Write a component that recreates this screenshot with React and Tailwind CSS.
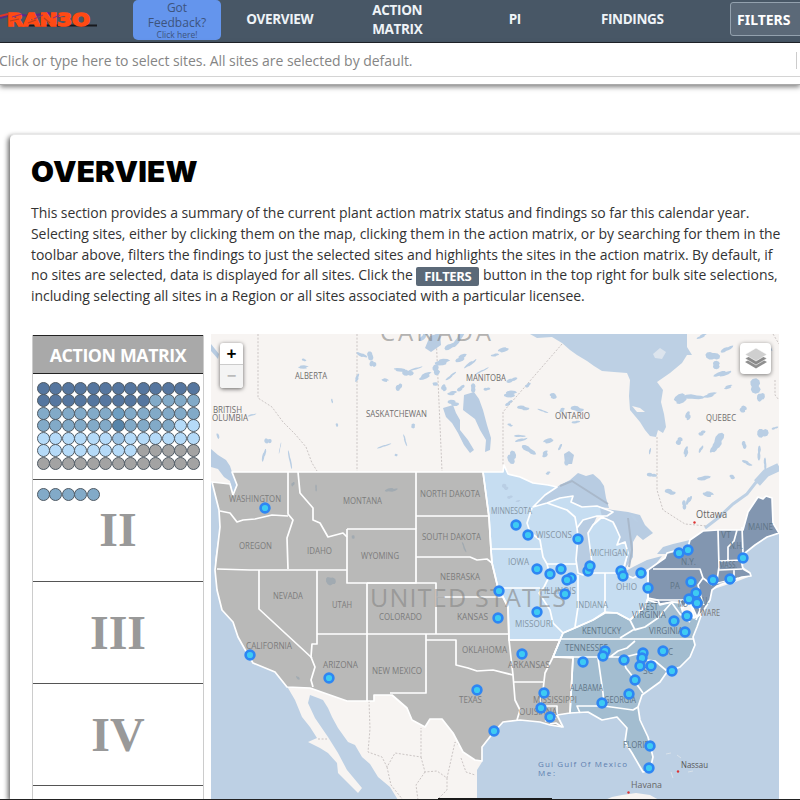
import React from "react";

const NAV = ["OVERVIEW", "ACTION MATRIX", "PI", "FINDINGS"];

const DOT = {
  d: "bg-[#55769f]",
  m: "bg-[#82aac8]",
  l: "bg-[#b5daf8]",
  g: "bg-[#a3a3a3]",
  x: "bg-[#6f9fc2]",
  y: "bg-[#5785aa]",
  z: "bg-[#9cc3e4]",
};
const MATRIX =
  "ddddddddddddd" +
  "dddddddddmmmm" +
  "mmmmmmxmmmmmm" +
  "mmmmmmymmmmll" +
  "llllllzllllll" +
  "llllllllggggg" +
  "ggggggggggggg";

function Dots({ codes }) {
  return (
    <div className="grid grid-cols-[repeat(13,12.5px)] auto-rows-[12.5px] pl-[3.5px]">
      {codes.split("").map((c, i) => (
        <span key={i} className={`h-[13px] w-[13px] rounded-full border border-[#4f5a64] ${DOT[c]}`} />
      ))}
    </div>
  );
}

function Level({ children }) {
  return (
    <div className="flex h-[102px] shrink-0 items-center justify-center border-b border-[#555] pt-[2px] font-['Liberation_Serif',serif] text-[48px] font-bold leading-none text-[#999]">
      {children}
    </div>
  );
}

const LAND =
  "M211 334H530L537 338L552 337L562 343L570 350L577 355L587 361L594 366L602 371L614 372L627 373L630 380L629 396L630 410L640 422L645 430L650 436L656 437L658 430L663 433L666 427L664 414L661 402L663 390L657 382L670 373L682 363L687 355L692 355L687 347V334H779V533L767 537L755 545L745 553L743 567L750 572L751 576L738 581L717 588L712 590L710 600L702 613L697 627L693 637L695 645L690 657L680 667L667 672L660 682L642 695L638 707L640 720L648 737L653 757L650 770L643 772L632 753L625 742L627 728L617 717L602 720L588 712L570 713L557 715L563 727L550 725L540 722L520 720L503 722L493 733L482 747V762L477 770V800H398L390 787L378 777L370 764L362 757L355 745L348 742L338 728L332 717L328 708L323 700L318 698L310 695L308 703L315 718L328 737L338 753L347 770L362 788L358 793L338 773L337 763L328 753L320 748L308 742L317 738L310 727L302 717L295 700L288 688L285 683L275 672L253 663L247 653L238 637L233 622L222 610L217 590L215 570V560L220 527L219 510L212 482H211Z";
const REGION_GRAY =
  "M232 472H483L489 517L491 550L492 563L498 588L503 597L508 607L509 640H560L553 657H573L570 713L557 715L563 727L550 725L540 722L520 720L503 722L493 733L482 747V761L475 760L463 752L453 733L442 719H430L425 727L412 720L407 708L392 695H374V701H347L310 688L287 687L275 672L253 663L247 653L238 637L233 622L222 610L217 590L215 570L220 527L219 510L212 482L230 484L233 495L237 485Z";
const REGION_LIGHT =
  "M483 472H503L504 465L508 474L520 477L533 483L548 485L557 487L545 495L533 507L547 503L560 498L573 496L571 502L582 507L597 506L613 512L607 516L597 516L583 520L577 528L578 537L576 560L578 573L583 575L592 563L588 533L593 525L602 517L613 522L616 528L620 537L617 545L625 542L628 553L622 573L633 578L648 570V598L645 607L638 612L630 620L617 613H605L593 620L577 627L563 633L560 640H509L508 607L503 597L498 588L492 563L491 550L489 517Z";
const REGION_MID =
  "M560 640L563 633L577 627L593 620L605 612L617 613L630 620L645 607L648 598L658 600L660 605L672 602L680 603L683 613L694 618L702 613L697 627L693 637L695 645L690 657L680 667L667 672L660 682L642 695L638 707L640 720L648 737L653 757L650 770L643 772L632 753L625 742L627 728L617 717L602 720L588 712L570 713L573 658L553 657Z";
const REGION_DARK =
  "M743 530L748 512L758 497L763 499L766 496L772 498L773 523L779 533L767 537L755 545L745 553L741 560L743 569L750 573L751 576L742 577L730 581L717 586L712 590L710 600L702 613L697 617L692 606L688 601L683 608L680 602L672 602L660 604L648 600V570L655 565L665 558L667 553L688 547L690 540L703 531L718 530Z";
const BORDERS = [
  "M220 511L230 513L237 522L243 520L255 519L272 515L288 516",
  "M288 472V514L293 520L287 538L288 569",
  "M217 569L250 570L347 570",
  "M298 472L300 493L313 508V520L320 523L328 537L343 533L347 537",
  "M347 529H416V583H347V529",
  "M416 472V529M416 516H489",
  "M416 557H470L477 560L487 559L492 563",
  "M367 583H436V597H503M436 597V634M367 583V701",
  "M317 570V634H508M317 634V644H312L311 657L315 667L311 680L313 687",
  "M259 570V609L312 658",
  "M426 634V693H390M426 640H456V665L468 668L477 671L493 670L513 675",
  "M509 640L513 675L515 700L520 710L517 720M514 682H543",
  "M560 640L553 657L545 673L543 690L540 700L543 706H557V716",
  "M490 549H542M532 508L527 523L530 532L540 540L543 557L547 564L550 575L544 587L539 593L550 610L553 623L563 633",
  "M547 564H576M498 588H540M578 575V607L575 627M605 573V612M583 573H622",
  "M547 503L567 510L575 517L577 528",
  "M653 569H700L703 578L712 585M703 578L698 585L701 597L704 605M648 600H690L694 618",
  "M718 530L719 567L717 580M737 530L734 541L728 547V560M742 527L743 553M719 561L742 560M719 570L742 569M734 570V578",
  "M560 639H693M620 638L633 630L645 627L658 618L672 602M630 620L635 630L645 627M672 603L680 614L690 622",
  "M635 641L627 648L618 651L610 657M553 657H625L637 654L647 660L655 661L667 671",
  "M623 659L626 668L633 677L638 686L643 693M598 658L603 693L604 706",
  "M580 713L577 706H604L633 710L638 707M697 595L700 610L696 620",
];
const LAKES = [
  "M560 485L570 480L578 473L586 476L593 474L600 480L604 486L606 498L609 508L597 507L582 507L571 502L573 496L560 498L547 503L533 507L545 495Z",
  "M583 520L597 516L593 525L588 533L592 563L583 575L578 573L576 560L578 537L577 528Z",
  "M600 508L613 510L628 512L640 515L645 525L653 533L643 540L637 535L633 542L633 557L625 569L628 553L625 542L617 545L620 537L616 528L613 522L602 517Z",
  "M622 573L635 566L647 560L662 556L655 565L648 570L633 578Z",
  "M657 554L663 547L673 544L690 540L688 546L677 552L666 554Z",
  "M211 449L218 455L226 460L230 466L233 475L237 485L233 494L230 481L224 477L218 469L211 467Z",
  "M464 395L474 392L479 399L483 410L487 425L491 438L490 450L485 452L486 440L480 430L475 419L463 410Z",
  "M443 408L453 405L456 413L460 420L460 430L468 440L474 450L470 453L464 445L458 433L452 423L446 417Z",
  "M564 454L569 451L574 455L572 464L565 464Z",
  "M211 344L219 354L218 359L211 351ZM430 336L440 333L441 345L431 352L425 348Z",
];
// centre x, centre y, width, height, tilt
const PONDS = [
  [303,367,12,3,5],[304,360,4,3,0],[362,355,11,4,30],[370,356,7,8,0],[373,364,6,8,20],[385,380,8,3,20],[357,378,3,9,30],[399,387,6,8,0],[400,370,16,3,5],[408,373,10,8,0],[425,376,15,5,-20],[415,369,14,2,-20],[424,336,12,5,-40],[459,338,6,18,35],[451,346,12,7,-30],[442,362,16,6,0],[436,370,8,10,20],[451,376,12,3,-35],[435,384,7,3,0],[444,388,5,8,30],[452,393,10,4,0],[453,403,11,6,0],[461,388,8,5,-30],[473,388,6,8,0],[482,371,13,2,-30],[461,358,13,6,-20],[470,364,15,3,-40],[487,389,6,4,0],[413,426,5,4,0],[384,446,13,2,-20],[405,440,2,12,-20],[332,401,2,4,0],[337,425,2,5,-20],[396,455,4,2,20],[268,441,6,7,-30],[264,455,3,13,10],[290,460,2,17,-10],[218,436,2,8,-20],[280,448,1,10,10],[252,415,8,2,-20],[495,355,8,3,0],[503,350,12,4,-20],[512,380,10,5,-20],[510,394,15,6,0],[523,408,11,5,0],[528,385,6,4,-20],[553,396,8,5,0],[543,411,10,2,20],[562,410,6,4,0],[577,409,12,6,0],[576,422,8,3,0],[548,441,12,4,-20],[529,450,14,7,30],[545,454,8,5,-30],[521,440,12,3,-20],[512,457,9,14,-25],[560,447,3,6,30],[520,436,10,3,0],[548,473,5,3,0],[510,425,5,3,0],[509,403,8,4,-30],[680,399,16,8,-30],[694,397,18,6,0],[710,395,14,4,-10],[722,374,18,5,-20],[713,356,13,10,20],[716,365,9,7,0],[727,349,12,5,-30],[702,336,12,3,-20],[755,386,13,13,30],[761,397,7,11,0],[743,409,8,6,30],[688,416,5,10,25],[702,433,7,5,0],[718,441,10,16,40],[714,449,5,12,35],[679,441,7,7,20],[686,452,4,12,20],[701,449,3,8,20],[744,445,5,7,0],[763,433,10,12,0],[759,453,4,13,0],[747,463,10,4,20],[704,478,13,5,0],[732,477,6,4,0],[652,475,9,5,10],[728,387,10,3,-15],[770,348,2,8,-30],[650,451,2,7,0],[765,464,3,11,0],[775,428,6,3,-20],[708,494,12,5,20],[670,492,10,6,0],[689,500,4,11,20],[684,505,5,8,0],[651,475,7,4,0],[567,461,6,8,0],[391,490,12,4,-15],[293,484,3,5,0],[316,488,2,6,0],[331,581,8,12,-25],[464,547,2,10,-25],[505,487,6,6,0],[510,497,5,4,0],[353,537,4,3,0],[298,678,2,6,-35],[518,501,5,2,0],[634,518,10,3,40],
];

function blob([x, y, w, h, t], n) {
  const a = (t * Math.PI) / 180;
  const pts = [];
  for (let i = 0; i < 13; i++) {
    const r = 0.45 + 0.75 * Math.abs(Math.sin(i * 2.7 + n * 1.9));
    const px = (Math.cos((i / 13) * 6.283) * w * r) / 2;
    const py = (Math.sin((i / 13) * 6.283) * h * r) / 2;
    pts.push(`${(x + px * Math.cos(a) - py * Math.sin(a)).toFixed(1)},${(y + px * Math.sin(a) + py * Math.cos(a)).toFixed(1)}`);
  }
  return pts.join(" ");
}

// text, left x, baseline y, width
const CANADA_LABELS = [
  ["ALBERTA",295,379,32],["SASKATCHEWAN",366,417,61],["MANITOBA",466,381,40],["ONTARIO",555,419,35],["QUEBEC",706,421,30],["BRITISH",213,413,29],["OLUMBIA",212,421,36],
];
const STATE_LABELS = [
  ["WASHINGTON",229,502,52],["OREGON",239,549,33],["MONTANA",343,504,39],["IDAHO",307,554,25],["WYOMING",361,559,38],["NORTH DAKOTA",420,497,60],["SOUTH DAKOTA",422,540,59],["NEBRASKA",440,580,40],["NEVADA",273,599,30],["UTAH",332,608,20],["COLORADO",379,620,43],["KANSAS",457,620,31],["CALIFORNIA",246,649,46],["ARIZONA",323,668,35],["NEW MEXICO",372,674,50],["OKLAHOMA",462,653,45],["TEXAS",459,703,23],["ARKANSAS",508,668,42],["MISSISSIPPI",533,703,44],["OUISIANA",519,715,38],
  ["MINNESOTA",491,514,41],["WISCONS",536,538,36],["IOWA",508,565,21],["ILLINOIS",544,594,32],["MISSOURI",515,627,38],["INDIANA",576,608,32],["MICHIGAN",590,556,38],["OHIO",616,590,21],
  ["KENTUCKY",582,634,39],["TENNESSEE",565,651,43],["WEST",639,610,19],["VIRGINIA",632,618,34],["VIRGINIA",649,634,34],["NC",662,655,11],["SC",643,674,10],["ALABAMA",570,691,33],["GEORGIA",604,703,32],["FLORIDA",623,748,32],
  ["MAINE",748,530,25],["VT",721,538,10],["N.H.",730,549,13],["MASS.",719,568,18],["N.Y.",681,565,15],["PA",670,589,10],["MD",678,607,10],["N.J.",699,604,10],
];
const SITES = [
  [265,508],[250,655],[329,678],[477,690],[494,731],[499,591],[498,618],[522,654],[544,693],[541,708],[550,717],[516,525],[528,535],[578,539],[537,569],[550,574],[561,569],[571,578],[567,580],[565,594],[537,612],[588,571],[590,566],[621,571],[623,576],[641,573],[648,588],[679,553],[688,550],[743,558],[713,580],[730,579],[691,582],[696,593],[689,599],[697,603],[687,616],[674,621],[685,632],[605,651],[603,656],[583,662],[624,660],[643,653],[642,658],[640,666],[651,666],[663,651],[672,671],[635,680],[629,694],[602,703],[650,746],[649,768],
];

function Label({ t, x, y, w, fill, size = 8.6 }) {
  return (
    <text x={x} y={y} textLength={w} lengthAdjust="spacingAndGlyphs" fontSize={size} fill={fill}>
      {t}
    </text>
  );
}

function SiteMap() {
  return (
    <svg viewBox="211 334 568 466" className="block h-[466px] w-[568px]" fontFamily="'Open Sans', 'Noto Sans', sans-serif">
      <rect x="211" y="334" width="568" height="466" fill="#bdd0e4" />
      <path d={LAND} fill="#f7f4f2" />
      <path d="M605 800L612 797L622 795L636 793L650 795L659 800Z" fill="#f7f4f2" />
      <path d="M632 406L640 408L645 412L637 412Z" fill="#f7f4f2" />
      <path d="M653 354L660 348L666 352L662 359L655 358Z" fill="#dce4ed" />
      <path d="M779 467L768 471L757 481L747 494L733 504L718 518L705 528" fill="none" stroke="#bdd0e4" strokeWidth="3" />
      <path d="M779 467L766 473L757 483" fill="none" stroke="#bdd0e4" strokeWidth="8" />
      <g fill="none" stroke="#cbc5c4" strokeWidth="1" strokeDasharray="2 1.6">
        <path d="M258 334V398L272 407L283 422L295 434L306 447L312 463L317 471M357 334V471M436 334L442 471M562 344L503 412V466M657 437V490L663 510L685 524L707 526M773 334L779 344M775 380V395L779 400" />
        <path d="M369 701L370 729L368 752L382 757L387 767L395 753L421 757V728M421 757L425 772L437 771L447 778L455 742L463 748M387 767L391 785L403 800M425 772L416 785L418 800M447 778V790L437 800M461 758L466 772L475 775M318 739H327" />
      </g>
      <path d={REGION_GRAY} fill="#b9b9b8" />
      <path d={REGION_LIGHT} fill="#c6ddf1" />
      <path d={REGION_MID} fill="#a3bdd0" />
      <path d={REGION_DARK} fill="#8296b0" />
      {LAKES.map((d) => (
        <path key={d} d={d} fill="#b8cce2" />
      ))}
      <path d="M560 486L572 481L608 504M628 518L632 550L629 567" fill="none" stroke="#a9b8ca" strokeWidth="2" />
      {PONDS.map((p, i) => (
        <polygon key={i} points={blob(p, i)} fill={p[1] > 482 && p[0] < 470 ? "#a1aab1" : "#b9cee4"} />
      ))}
      <path d="M717 583L738 578L734 583Z" fill="#8296b0" stroke="#fff" strokeWidth="1" />
      <g fill="none" stroke="#fff" strokeWidth="1.7" strokeLinejoin="round">
        <path d={REGION_GRAY} />
        <path d={REGION_LIGHT} />
        <path d={REGION_MID} />
        <path d={REGION_DARK} />
        {BORDERS.map((d) => (
          <path key={d} d={d} />
        ))}
        <path d="M550 724L556 723L562 727M545 721L556 718" />
      </g>
      <g fill="#858585" fillOpacity="0.62">
        <text x="380" y="341" fontSize="24" textLength="111">CANADA</text>
        <text x="370" y="606.5" fontSize="25" textLength="196">UNITED STATES</text>
      </g>
      {CANADA_LABELS.map(([t, x, y, w]) => (
        <Label key={t} t={t} x={x} y={y} w={w} fill="#6f6d6d" />
      ))}
      {STATE_LABELS.map(([t, x, y, w]) => (
        <Label key={t + y} t={t} x={x} y={y} w={w} fill={x > 485 && y < 630 && x < 632 ? "#8495a5" : x > 560 ? "#5f7587" : "#7c7c7c"} />
      ))}
      <Label t="WARE" x={700} y={616} w={20} fill="#777" />
      <Label t="Ottawa" x={696} y={518} w={31} fill="#666" size={10} />
      <Label t="Nassau" x={681} y={768} w={27} fill="#555" size={9} />
      <Label t="Havana" x={631} y={788} w={31} fill="#666" size={9} />
      <g fontSize="8" fill="#5d7fb0">
        <text x="538" y="767" textLength="89">Gul Gulf Of Mexico</text>
        <text x="538" y="776" textLength="17">Me:</text>
      </g>
      <path d="M666 754L671 753M677 755L681 758M671 772L673 778M688 772L693 771" stroke="#d9e2ea" strokeWidth="1" />
      <g fill="#d33">
        <circle cx="694.5" cy="522.5" r="1.2" />
        <circle cx="678" cy="771.5" r="1.2" />
        <circle cx="628.5" cy="792.5" r="1.2" />
      </g>
      <g fill="#3ecbf2" stroke="#2e86f3" strokeWidth="2.6">
        {SITES.map(([x, y]) => (
          <circle key={`${x}-${y}`} cx={x} cy={y} r="4.4" />
        ))}
      </g>
    </svg>
  );
}

export default function App() {
  return (
    <div className="flex h-[800px] w-[800px] flex-col overflow-hidden bg-white font-['Open_Sans','Noto_Sans',sans-serif]">
      <header className="flex h-[43px] shrink-0 border-b border-[#20242a] bg-[#485766]">
        <div className="w-[133px] shrink-0">
          <svg viewBox="0 0 133 40" className="h-[40px] w-[133px]" fontFamily="'DejaVu Sans', sans-serif" fontWeight="bold">
            <path d="M20 25.5L97 25.5" stroke="#17191d" strokeWidth="2" />
            <path d="M0 18L14 14L30 16L48 13L60 17" fill="none" stroke="#5a2a8a" strokeWidth="2" />
            <text x="7" y="26" fontSize="18" textLength="83" lengthAdjust="spacingAndGlyphs" fill="#ff4a14" stroke="#ff4a14" strokeWidth="1.6">RAN3O</text>
            <path d="M12 17L22 14M34 19L43 15M53 18L60 15" stroke="#8a2f80" strokeWidth="1" />
            <path d="M10 21L19 19M28 23L36 20M44 18L50 23" stroke="#b8401f" strokeWidth="1.2" />
            <path d="M0 16L8 14" stroke="#e0362a" strokeWidth="2" />
          </svg>
        </div>
        <button className="flex h-[40px] w-[88px] shrink-0 flex-col items-center justify-end rounded-[5px] bg-[#6495ed] text-[12px] leading-[15px] text-[#3d547d]">
          <span>Got</span>
          <span>Feedback?</span>
          <span className="text-[8.5px] leading-[10px]">Click here!</span>
        </button>
        <nav className="flex w-[470px] shrink-0 font-bold text-[#eef3f7]">
          {NAV.map((n) => (
            <a key={n} className="flex w-[117.5px] items-center justify-center px-5 pb-[3px] text-center text-[13.5px] leading-[19px] tracking-[-0.35px]">
              {n}
            </a>
          ))}
        </nav>
        <button className="ml-[39px] mt-[2px] h-[34px] w-[76px] shrink-0 rounded-[3px] border border-[#93a1ae] bg-[#5b6978] pl-[6px] text-left font-['Noto_Sans',sans-serif] text-[14px] font-bold text-white">
          FILTERS
        </button>
      </header>

      <div className="h-[42px] shrink-0 border-b border-[#aaa] shadow-[0_2px_5px_rgba(0,0,0,0.5)]">
        <div className="flex h-[34px] items-center justify-between border-b border-[#d4d4d4] pr-[3px] pt-[2px] text-[14px] text-[#858585]">
          <span className="-ml-px whitespace-nowrap tracking-[-0.05px]">Click or type here to select sites. All sites are selected by default.</span>
          <span className="h-[17px] w-px bg-[#ccc]" />
        </div>
      </div>

      <main className="ml-[10px] mt-[49px] w-[810px] min-h-0 flex-1 rounded-tl-[5px] border-t border-[#e8e8e8] bg-white pl-[21px] shadow-[-2px_2px_5px_rgba(0,0,0,0.6)]">
        <h1 className="mt-[20px] h-[34px] w-fit origin-left scale-x-[1.06] font-['Inter',sans-serif] text-[28px] font-black leading-[34px] tracking-[0.2px] text-black">OVERVIEW</h1>
        <div className="mt-[14px] whitespace-nowrap text-[14px] leading-[20.8px] tracking-[-0.06px] text-[#333]">
          <p>This section provides a summary of the current plant action matrix status and findings so far this calendar year.</p>
          <p>Selecting sites, either by clicking them on the map, clicking them in the action matrix, or by searching for them in the</p>
          <p>toolbar above, filters the findings to just the selected sites and highlights the sites in the action matrix. By default, if</p>
          <p className="h-[20.8px]">
            no sites are selected, data is displayed for all sites. Click the{" "}
            <span className="inline-block h-[19px] w-[63px] rounded-[2px] bg-[#5b6978] text-center align-middle text-[13px] font-bold leading-[19px] tracking-[-0.3px] text-white">FILTERS</span>{" "}
            button in the top right for bulk site selections,
          </p>
          <p>including selecting all sites in a Region or all sites associated with a particular licensee.</p>
        </div>
        <div className="mt-[27px] flex items-start">
          <section className="ml-px mt-[1px] flex h-[470px] w-[172px] flex-col overflow-hidden border-x border-[#ccc]">
            <h2 className="-mx-px h-[39px] shrink-0 border border-[#222] bg-[#a9a9a9] text-center text-[17.8px] font-bold leading-[38px] tracking-[-0.4px] text-white">
              ACTION MATRIX
            </h2>
            <div className="h-[106px] shrink-0 border-b border-[#555] pt-[8px]">
              <Dots codes={MATRIX} />
            </div>
            <div className="h-[102px] shrink-0 border-b border-[#555] pt-[8px]">
              <Dots codes="mmmmm" />
              <div className="mt-[5px] text-center font-['Liberation_Serif',serif] text-[48px] font-bold leading-[49px] text-[#999]">II</div>
            </div>
            <Level>III</Level>
            <Level>IV</Level>
          </section>
          <div className="relative ml-[7px]">
            <SiteMap />
            <div className="absolute left-[9px] top-[9px] w-[23px] rounded-[3px] bg-white text-center font-['Liberation_Sans',sans-serif] font-bold shadow-[0_1px_4px_rgba(0,0,0,0.6)]">
              <div className="h-[22px] border-b border-[#ccc] text-[17px] leading-[22px] text-black">+</div>
              <div className="h-[23px] rounded-b-[3px] bg-[#f4f4f4] text-[16px] leading-[22px] text-[#bbb]">−</div>
            </div>
            <div className="absolute left-[529px] top-[9px] flex h-[31px] w-[31px] items-center justify-center rounded-[4px] bg-white shadow-[0_1px_4px_rgba(0,0,0,0.5)]">
              <svg viewBox="0 0 26 26" className="h-[26px] w-[26px]">
                <path d="M2 17L13 11L24 17L13 23.5Z" fill="#8f8f8f" />
                <path d="M2 13.5L13 7.5L24 13.5L13 20Z" fill="#8a8a8a" stroke="#fff" strokeWidth=".6" />
                <path d="M2 9.5L13 3L24 9.5L13 16Z" fill="#cfcfcf" stroke="#fff" strokeWidth=".6" />
              </svg>
            </div>
          </div>
        </div>
      </main>
      <div className="relative z-10 flex h-px shrink-0 items-end bg-[#222]">
        <div className="ml-[438px] h-[2px] w-[114px] shrink-0 bg-[#1a1a1a]" />
      </div>
    </div>
  );
}
